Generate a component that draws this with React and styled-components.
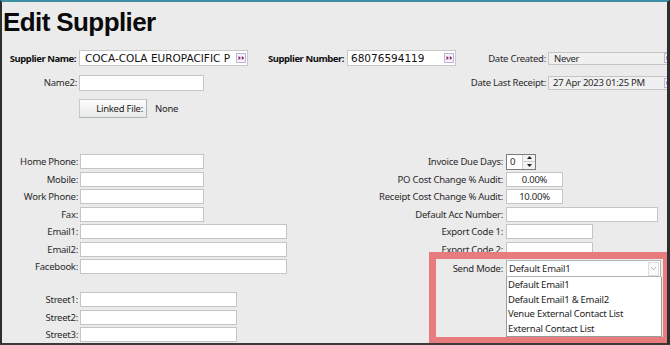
import styled, { createGlobalStyle } from "styled-components"
import { ChevronDown } from "lucide-react"

const GlobalStyle = createGlobalStyle`
  html, body {
    margin: 0;
    padding: 0;
    background: #ebebeb;
  }
  body {
    width: 670px;
    height: 345px;
    overflow: hidden;
  }
`

//Styled Components
const Window = styled.div`
  box-sizing: border-box;
  width: 670px;
  height: 345px;
  overflow: hidden;
  background: #ebebeb;
  border-top: 2px solid #3f8fa3;
  border-left: 2px solid #2e2e2e;
  border-right: 3px solid #2e2e2e;
  border-bottom: 2px solid #3a3a3a;
  font-family: "Noto Sans", sans-serif;
  font-size: 9.5px;
  letter-spacing: -0.25px;
  color: #2a2a2a;
`

const Title = styled.h1`
  margin: 5px 0 0 1px;
  font-family: "Liberation Sans", Arial, sans-serif;
  font-size: 26px;
  line-height: 30px;
  font-weight: 700;
  letter-spacing: -0.6px;
  color: #0a0a0a;
`

const HeaderGrid = styled.div`
  display: grid;
  grid-template-columns: 75px 187px 77px 109px 88px 1fr;
  grid-template-rows: 16px 16px 19px;
  column-gap: 2px;
  row-gap: 8.5px;
  align-items: center;
  margin-top: 13px;
`

const Label = styled.div`
  flex-shrink: 0;
  width: ${p => p.$width ? `${p.$width}px` : "auto"};
  text-align: right;
  white-space: nowrap;
  font-weight: ${p => p.$bold ? 700 : 400};
  letter-spacing: ${p => p.$bold ? "-0.45px" : "-0.25px"};
  color: ${p => p.$bold ? "#111" : "#2a2a2a"};
  padding-right: ${p => p.$pad || 0}px;
`

const Field = styled.div`
  box-sizing: border-box;
  display: flex;
  align-items: center;
  justify-content: ${p => p.$center ? "center" : "flex-start"};
  width: ${p => p.$width}px;
  height: ${p => p.$height || 15}px;
  padding: 0 0 0 ${p => p.$pad ?? 3}px;
  background: ${p => p.$grey ? "#f0f0f0" : "#ffffff"};
  border: 1px solid #c5c5c5;
  white-space: nowrap;
  overflow: hidden;
  flex-shrink: 0;
`

const CodeField = styled(Field)`
  font-family: "DejaVu Sans", Verdana, sans-serif;
  font-size: 10.5px;
  letter-spacing: 0;
  color: #111;
  border-color: #c9c9c9;
`

const FieldText = styled.span`
  flex: 1;
  overflow: hidden;
`

const LookupButton = styled.span`
  box-sizing: border-box;
  display: flex;
  align-items: center;
  justify-content: center;
  width: 10px;
  height: 10px;
  margin-right: 1px;
  border: 1px solid #bdb6cf;
  background: #f5f3f9;
  flex-shrink: 0;
`

const LinkedRow = styled.div`
  display: flex;
  align-items: center;
  height: 19px;
`

const LinkedButton = styled.div`
  box-sizing: border-box;
  width: 68px;
  height: 19px;
  padding-right: 3px;
  display: flex;
  align-items: center;
  justify-content: flex-end;
  background: linear-gradient(#fdfdfd, #e9e9e9);
  border: 1px solid #c3cccf;
  border-bottom-color: #a9b6ba;
  border-right-color: #a9b6ba;
  color: #222;
`

const LinkedValue = styled.span`
  margin-left: 8px;
  color: #222;
`

const Body = styled.div`
  display: flex;
  margin-top: 36px;
`

const Column = styled.div`
  display: flex;
  flex-direction: column;
  gap: 2.5px;
  width: ${p => p.$width ? `${p.$width}px` : "auto"};
  flex: ${p => p.$width ? "none" : 1};
`

const Row = styled.div`
  display: flex;
  align-items: center;
  gap: ${p => p.$gap}px;
  height: 15px;
  margin-top: ${p => p.$top || 0}px;
`

const Spinner = styled.div`
  box-sizing: border-box;
  display: flex;
  width: 30px;
  height: 16px;
  border: 1px solid #7b7b7b;
  background: #fff;
`

const SpinValue = styled.span`
  flex: 1;
  padding-left: 3px;
  line-height: 14px;
`

const SpinButtons = styled.div`
  display: flex;
  flex-direction: column;
  width: 12px;
  border-left: 1px solid #cfcfcf;
`

const SpinButton = styled.div`
  flex: 1;
  display: flex;
  align-items: center;
  justify-content: center;
  background: #f3f3f3;
  & + & {
    border-top: 1px solid #cfcfcf;
  }
`

const Highlight = styled.div`
  box-sizing: border-box;
  margin-left: 66px;
  width: 227px;
  height: 78px;
  padding-top: 1px;
  outline: 7px solid #e87b7d;
`

const SelectWrap = styled.div`
  position: relative;
  width: 155px;
`

const Select = styled.div`
  box-sizing: border-box;
  display: flex;
  align-items: center;
  height: 17px;
  padding-left: 2px;
  background: #fff;
  border: 1px solid #b4b4b4;
`

const SelectArrow = styled.span`
  box-sizing: border-box;
  display: flex;
  align-items: center;
  justify-content: center;
  width: 11px;
  height: 14px;
  margin-right: 1px;
  border: 1px solid #dcdcdc;
  background: #fafafa;
  color: #777;
`

const DropList = styled.div`
  position: absolute;
  top: 17px;
  left: 0;
  box-sizing: border-box;
  width: 156px;
  height: 60px;
  padding-top: 1px;
  background: #fff;
  border: 1px solid #9b9b9b;
  border-top: none;
`

const DropItem = styled.div`
  height: 14.5px;
  line-height: 14.5px;
  padding-left: 1px;
  white-space: nowrap;
  color: #1e1e1e;
`

function LookupIcon() {
  return (
    <LookupButton>
      <svg width="7" height="6" viewBox="0 0 7 6">
        <path d="M0.5 1 L3 3 L0.5 5 Z M3.8 1 L6.3 3 L3.8 5 Z" fill="#8c1f70" />
      </svg>
    </LookupButton>
  )
}

function Tri({ up }) {
  return (
    <svg width="5" height="3" viewBox="0 0 5 3">
      <path d={up ? "M0 3 L2.5 0 L5 3 Z" : "M0 0 L2.5 3 L5 0 Z"} fill="#222" />
    </svg>
  )
}

const leftRows = [
  ["Home Phone:", 124],
  ["Mobile:", 124],
  ["Work Phone:", 124],
  ["Fax:", 124],
  ["Email1:", 207],
  ["Email2:", 207],
  ["Facebook:", 207],
]

const streetRows = ["Street1:", "Street2:", "Street3:"]

const rightRows = [
  ["PO Cost Change % Audit:", 57, "0.00%"],
  ["Receipt Cost Change % Audit:", 57, "10.00%"],
  ["Default Acc Number:", 152, ""],
  ["Export Code 1:", 87, ""],
  ["Export Code 2:", 87, ""],
]

const sendModes = [
  "Default Email1",
  "Default Email1 & Email2",
  "Venue External Contact List",
  "External Contact List",
]

function App() {
  return (
    <Window>
      <GlobalStyle />
      <Title>Edit Supplier</Title>

      <HeaderGrid>
        <Label $bold $pad={1}>Supplier Name:</Label>
        <CodeField $width={169} $height={16} $pad={5}>
          <FieldText>COCA-COLA EUROPACIFIC P</FieldText>
          <LookupIcon />
        </CodeField>
        <Label $bold $pad={1}>Supplier Number:</Label>
        <CodeField $width={109} $height={16} $pad={3}>
          <FieldText>68076594119</FieldText>
          <LookupIcon />
        </CodeField>
        <Label>Date Created:</Label>
        <Field $width={128} $height={13} $pad={5} $grey>
          <FieldText>Never</FieldText>
          <LookupIcon />
        </Field>

        <Label>Name2:</Label>
        <Field $width={125} $height={16} />
        <div />
        <div />
        <Label>Date Last Receipt:</Label>
        <Field $width={128} $height={14} $pad={4} $grey>
          <FieldText>27 Apr 2023 01:25 PM</FieldText>
          <LookupIcon />
        </Field>

        <div />
        <LinkedRow>
          <LinkedButton>Linked File:</LinkedButton>
          <LinkedValue>None</LinkedValue>
        </LinkedRow>
      </HeaderGrid>

      <Body>
        <Column $width={368}>
          {leftRows.map(([label, width]) => (
            <Row key={label} $gap={2}>
              <Label $width={76}>{label}</Label>
              <Field $width={width} />
            </Row>
          ))}
          {streetRows.map((label, i) => (
            <Row key={label} $gap={2} $top={i === 0 ? 15.5 : 0}>
              <Label $width={76}>{label}</Label>
              <Field $width={157} />
            </Row>
          ))}
        </Column>

        <Column>
          <Row $gap={3}>
            <Label $width={133}>Invoice Due Days:</Label>
            <Spinner>
              <SpinValue>0</SpinValue>
              <SpinButtons>
                <SpinButton><Tri up /></SpinButton>
                <SpinButton><Tri /></SpinButton>
              </SpinButtons>
            </Spinner>
          </Row>
          {rightRows.map(([label, width, value]) => (
            <Row key={label} $gap={3}>
              <Label $width={133}>{label}</Label>
              <Field $width={width} $center={!!value} $pad={0}>{value}</Field>
            </Row>
          ))}

          <Highlight>
            <Row $gap={3} style={{ height: 17, alignItems: "flex-start" }}>
              <Label $width={67} style={{ lineHeight: "17px" }}>Send Mode:</Label>
              <SelectWrap>
                <Select>
                  <FieldText>Default Email1</FieldText>
                  <SelectArrow>
                    <ChevronDown size={9} strokeWidth={1.5} />
                  </SelectArrow>
                </Select>
                <DropList>
                  {sendModes.map(mode => (
                    <DropItem key={mode}>{mode}</DropItem>
                  ))}
                </DropList>
              </SelectWrap>
            </Row>
          </Highlight>
        </Column>
      </Body>
    </Window>
  )
}

export default App
